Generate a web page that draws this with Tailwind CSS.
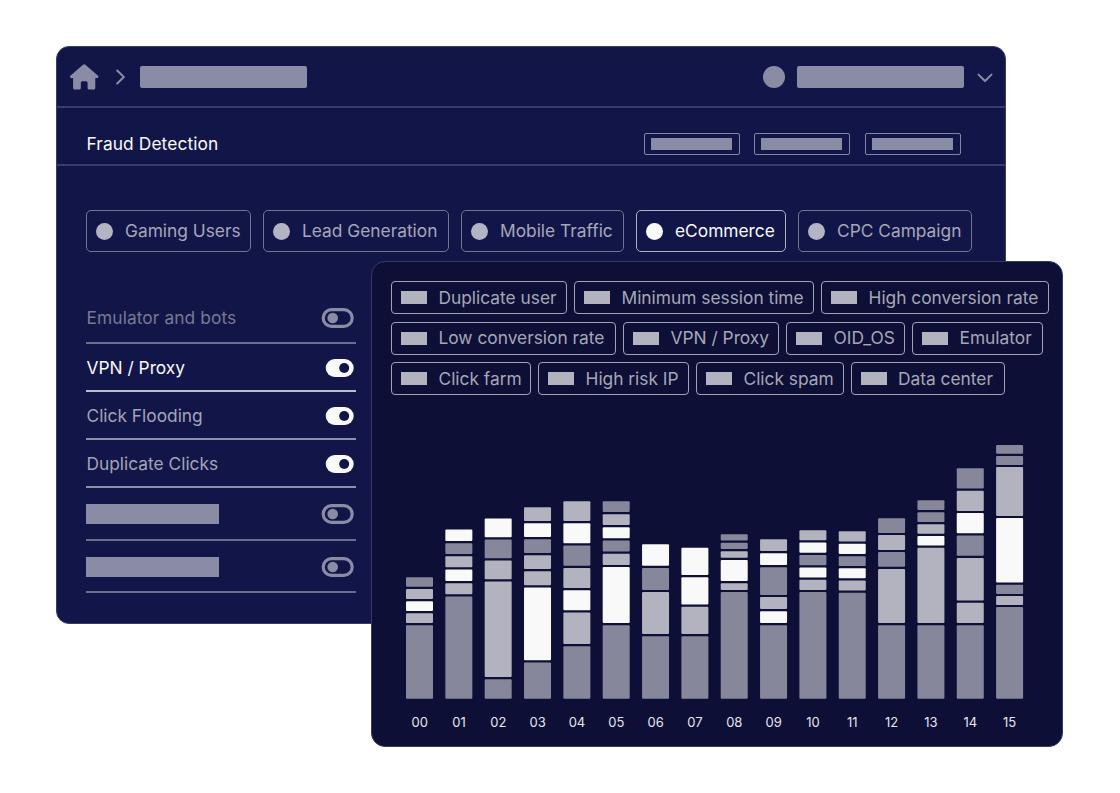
<!DOCTYPE html>
<html lang="en">
<head>
    <meta charset="UTF-8">
    <meta name="viewport" content="width=device-width, initial-scale=1.0">
    <title>Fraud Detection</title>
    <script src="https://cdn.jsdelivr.net/npm/@tailwindcss/browser@4"></script>
</head>
<body class="bg-white w-[1120px] h-[793px] overflow-hidden relative font-['Inter',sans-serif] text-[17.330px] leading-5 whitespace-nowrap">
    <!-- Dashboard window -->
    <main class="absolute left-[56px] top-[46px] w-[950px] h-[578px] bg-[#121547] border border-[#3b3d68] rounded-[13px] overflow-hidden">
        <!-- Top bar -->
        <header class="h-[61px] border-b-2 border-[#3a3c68] flex items-center pl-[13px] pr-[12px]">
            <svg class="w-[29px] h-[26px]" viewBox="0 0 29 26" fill="#8a8ba4">
                <path d="M13 .8a1.8 1.8 0 0 1 2.4 0L27.8 11.4c1.1 1 .6 2.7-.9 2.7H25.3V24a1.6 1.6 0 0 1-1.6 1.6H19.2A1.6 1.6 0 0 1 17.6 24v-5a1.8 1.8 0 0 0-1.8-1.8h-3.2a1.8 1.8 0 0 0-1.8 1.8v5a1.6 1.6 0 0 1-1.6 1.6H4.7A1.6 1.6 0 0 1 3.1 24v-9.9H1.5c-1.5 0-2-1.7-.9-2.7z"/>
            </svg>
            <svg class="w-[10px] h-[16px] ml-[17px]" viewBox="0 0 10 16" fill="none" stroke="#8a8ba4" stroke-width="2" stroke-linecap="round" stroke-linejoin="round">
                <path d="M1.2 1.5 7.8 8l-6.6 6.5"/>
            </svg>
            <div class="w-[167px] h-[22px] ml-[14px] rounded-[2px] bg-[#8a8ba4]"></div>
            <div class="w-[22px] h-[22px] ml-auto rounded-full bg-[#8a8ba4]"></div>
            <div class="w-[167px] h-[22px] ml-[12px] rounded-[2px] bg-[#8a8ba4]"></div>
            <svg class="w-[16px] h-[10px] ml-[13px] mt-[2px]" viewBox="0 0 16 10" fill="none" stroke="#8a8ba4" stroke-width="2" stroke-linecap="round" stroke-linejoin="round">
                <path d="M1.5 1.6 8 8l6.5-6.4"/>
            </svg>
        </header>

        <!-- Page title -->
        <div class="h-[58px] border-b-2 border-[#3a3c68] flex items-center pl-[29px] pr-[44px] pt-[16px]">
            <h1 class="pl-[0.5px] tracking-[0.1px] text-[#f9f9f9]">Fraud Detection</h1>
            <div class="ml-auto flex gap-[14.6px]">
                <div class="w-[96px] h-[22px] border border-[#8385a0] rounded-[2px] pl-[6px] pt-[4px]"><div class="w-[81px] h-[12px] bg-[#8a8ba4]"></div></div>
                <div class="w-[96px] h-[22px] border border-[#8385a0] rounded-[2px] pl-[6px] pt-[4px]"><div class="w-[81px] h-[12px] bg-[#8a8ba4]"></div></div>
                <div class="w-[96px] h-[22px] border border-[#8385a0] rounded-[2px] pl-[6px] pt-[4px]"><div class="w-[81px] h-[12px] bg-[#8a8ba4]"></div></div>
            </div>
        </div>

        <!-- Segments -->
        <nav class="flex gap-[12px] pl-[29px] mt-[44px] text-[#a6a7ba]">
            <div class="w-[165px] h-[42px] border border-[#73758f] rounded-[5px] flex items-center gap-[12px] pl-[9px]"><span class="w-[17px] h-[17px] rounded-full bg-[#b2b3c3]"></span>Gaming Users</div>
            <div class="w-[186px] h-[42px] border border-[#73758f] rounded-[5px] flex items-center gap-[12px] pl-[9px]"><span class="w-[17px] h-[17px] rounded-full bg-[#b2b3c3]"></span>Lead Generation</div>
            <div class="w-[163px] h-[42px] border border-[#73758f] rounded-[5px] flex items-center gap-[12px] pl-[9px]"><span class="w-[17px] h-[17px] rounded-full bg-[#b2b3c3]"></span>Mobile Traffic</div>
            <div class="w-[150px] h-[42px] border border-[#b0b1c0] rounded-[5px] flex items-center gap-[12px] pl-[9px] text-[#f9f9f9]"><span class="w-[17px] h-[17px] rounded-full bg-[#f9f9f9]"></span>eCommerce</div>
            <div class="w-[174px] h-[42px] border border-[#73758f] rounded-[5px] flex items-center gap-[12px] pl-[9px]"><span class="w-[17px] h-[17px] rounded-full bg-[#b2b3c3]"></span>CPC Campaign</div>
        </nav>

        <!-- Rules -->
        <ul class="w-[270px] ml-[29px] mt-[41px] text-[#a3a4b7]">
            <li class="h-[51px] border-b-2 border-[#6c6e8c] flex items-center justify-between pl-[0.5px] pr-[2px] tracking-[0.1px] text-[#777993]">
                Emulator and bots
                <svg class="w-[33px] h-[20px]" viewBox="0 0 33 20"><rect x="2.2" y="1.7" width="29" height="16.6" rx="8.3" fill="none" stroke="#8a8ba4" stroke-width="3.2"/><circle cx="11.7" cy="10" r="5.3" fill="#8a8ba4"/></svg>
            </li>
            <li class="h-[48px] border-b-2 border-[#bcbdca] flex items-center justify-between pl-[0.5px] pr-[2px] pt-[2px] text-[#f9f9f9]">
                VPN / Proxy
                <svg class="w-[29px] h-[18px]" viewBox="0 0 29 18"><rect x=".7" width="28" height="18" rx="9" fill="#f9f9f9"/><circle cx="19.2" cy="9" r="5" fill="#121547"/></svg>
            </li>
            <li class="h-[48px] border-b-2 border-[#8e90a7] flex items-center justify-between pl-[0.5px] pr-[2px] pt-[2px]">
                Click Flooding
                <svg class="w-[29px] h-[18px]" viewBox="0 0 29 18"><rect x=".7" width="28" height="18" rx="9" fill="#f9f9f9"/><circle cx="19.2" cy="9" r="5" fill="#121547"/></svg>
            </li>
            <li class="h-[48px] border-b-2 border-[#8e90a7] flex items-center justify-between pl-[0.5px] pr-[2px] pt-[2px]">
                Duplicate Clicks
                <svg class="w-[29px] h-[18px]" viewBox="0 0 29 18"><rect x=".7" width="28" height="18" rx="9" fill="#f9f9f9"/><circle cx="19.2" cy="9" r="5" fill="#121547"/></svg>
            </li>
            <li class="h-[53px] border-b-2 border-[#6c6e8c] flex items-center justify-between pr-[2px]">
                <div class="w-[133px] h-[20px] bg-[#8a8ba4]"></div>
                <svg class="w-[33px] h-[20px] mt-px" viewBox="0 0 33 20"><rect x="2.2" y="1.7" width="29" height="16.6" rx="8.3" fill="none" stroke="#8a8ba4" stroke-width="3.2"/><circle cx="11.7" cy="10" r="5.3" fill="#8a8ba4"/></svg>
            </li>
            <li class="h-[52px] border-b-2 border-[#6c6e8c] flex items-center justify-between pr-[2px] pt-px">
                <div class="w-[133px] h-[20px] bg-[#8a8ba4]"></div>
                <svg class="w-[33px] h-[20px] mt-px" viewBox="0 0 33 20"><rect x="2.2" y="1.7" width="29" height="16.6" rx="8.3" fill="none" stroke="#8a8ba4" stroke-width="3.2"/><circle cx="11.7" cy="10" r="5.3" fill="#8a8ba4"/></svg>
            </li>
        </ul>
    </main>

    <!-- Chart window, lies over the dashboard -->
    <section class="absolute left-[371px] top-[261px] w-[692px] h-[486px] bg-[#0d0f37] border border-[#383a60] rounded-[14px]">
        <!-- Legend -->
        <div class="h-[133px] pl-[19px] pt-[19px] flex flex-col gap-[7.5px] text-[#a6a7b4]">
            <div class="flex gap-[7px]">
                <div class="w-[176px] h-[33px] border border-[#a3a4b2] rounded-[4px] flex items-center gap-[11.5px] pl-[9px]"><span class="w-[26px] h-[13px] bg-[#b2b3bf]"></span>Duplicate user</div>
                <div class="w-[240px] h-[33px] border border-[#a3a4b2] rounded-[4px] flex items-center gap-[11.5px] pl-[9px]"><span class="w-[26px] h-[13px] bg-[#b2b3bf]"></span>Minimum session time</div>
                <div class="w-[228px] h-[33px] border border-[#a3a4b2] rounded-[4px] flex items-center gap-[11.5px] pl-[9px]"><span class="w-[26px] h-[13px] bg-[#b2b3bf]"></span>High conversion rate</div>
            </div>
            <div class="flex gap-[7px]">
                <div class="w-[225px] h-[33px] border border-[#a3a4b2] rounded-[4px] flex items-center gap-[11.5px] pl-[9px]"><span class="w-[26px] h-[13px] bg-[#b2b3bf]"></span>Low conversion rate</div>
                <div class="w-[156px] h-[33px] border border-[#a3a4b2] rounded-[4px] flex items-center gap-[11.5px] pl-[9px]"><span class="w-[26px] h-[13px] bg-[#b2b3bf]"></span>VPN / Proxy</div>
                <div class="w-[119px] h-[33px] border border-[#a3a4b2] rounded-[4px] flex items-center gap-[11.5px] pl-[9px]"><span class="w-[26px] h-[13px] bg-[#b2b3bf]"></span>OID_OS</div>
                <div class="w-[131px] h-[33px] border border-[#a3a4b2] rounded-[4px] flex items-center gap-[11.5px] pl-[9px]"><span class="w-[26px] h-[13px] bg-[#b2b3bf]"></span>Emulator</div>
            </div>
            <div class="flex gap-[7px]">
                <div class="w-[140px] h-[33px] border border-[#a3a4b2] rounded-[4px] flex items-center gap-[11.5px] pl-[9px]"><span class="w-[26px] h-[13px] bg-[#b2b3bf]"></span>Click farm</div>
                <div class="w-[151px] h-[33px] border border-[#a3a4b2] rounded-[4px] flex items-center gap-[11.5px] pl-[9px]"><span class="w-[26px] h-[13px] bg-[#b2b3bf]"></span>High risk IP</div>
                <div class="w-[147.5px] h-[33px] border border-[#a3a4b2] rounded-[4px] flex items-center gap-[11.5px] pl-[9px]"><span class="w-[26px] h-[13px] bg-[#b2b3bf]"></span>Click spam</div>
                <div class="w-[154px] h-[33px] border border-[#a3a4b2] rounded-[4px] flex items-center gap-[11.5px] pl-[9px]"><span class="w-[26px] h-[13px] bg-[#b2b3bf]"></span>Data center</div>
            </div>
        </div>

        <!-- Stacked bars -->
        <svg id="chart" class="w-[630px] h-[260px] ml-[28px] mt-[45px]" viewBox="0 0 630 260"></svg>
        <div id="hours" class="w-[629.3px] ml-[28px] mt-[12px] grid grid-cols-16 text-center text-[13px] leading-5 text-[#e6e6eb]"></div>
    </section>

    <script>
        const colors = { m: '#86879b', l: '#b2b3bf', w: '#f9f9f9' };
        const base = 259;
        // One entry per hour: segment colors from the top, and the height of each segment's top edge
        const bars = [
            ['mlwlm', [122, 110.2, 98, 86, 74]],
            ['wmlwlm', [169.7, 156, 143, 129.7, 116, 102.7]],
            ['wmllm', [180.7, 159.8, 138.8, 117.7, 20]],
            ['lwmllwm', [192, 176, 160, 144, 128, 111.8, 36.7]],
            ['lwmlwlm', [198, 176, 153.7, 131.2, 109, 86.8, 53]],
            ['mlwmlwm', [198, 185, 172, 158.7, 145.5, 132.1, 74]],
            ['wmlm', [155, 131.2, 107.1, 63]],
            ['wwlm', [151.5, 122, 92.4, 63]],
            ['mmlwlm', [165, 156.5, 148, 139.2, 116, 107.1]],
            ['lwmlwm', [160, 146, 132, 102.1, 88, 74]],
            ['lwmwlm', [169, 156.7, 144.2, 131.8, 119.4, 107.1]],
            ['lwmwlm', [168, 155.4, 143, 130.9, 118.7, 106.5]],
            ['mlmlm', [181, 164.1, 147.1, 130.2, 74]],
            ['mmlwlm', [199, 187, 175, 163.2, 151.4, 74]],
            ['mlwmllm', [231, 208.4, 186.1, 163.8, 141.2, 96.4, 74]],
            ['mmlwmlm', [254.3, 243.2, 232.1, 181.1, 114.4, 103.1, 92.1]]
        ];
        const chart = document.getElementById('chart');
        const hours = document.getElementById('hours');

        bars.forEach(([kinds, tops], i) => {
            tops.forEach((top, j) => {
                const last = j === tops.length - 1;
                const rect = document.createElementNS('http://www.w3.org/2000/svg', 'rect');
                rect.setAttribute('x', (6 + i * 39.34).toFixed(2));
                rect.setAttribute('y', (base - top + 0.2).toFixed(2));
                rect.setAttribute('width', 27);
                rect.setAttribute('height', (last ? top - 0.4 : top - tops[j + 1] - 2.2).toFixed(2));
                rect.setAttribute('rx', 1);
                rect.setAttribute('fill', colors[kinds[j]]);
                chart.appendChild(rect);
            });
            const label = document.createElement('span');
            label.textContent = String(i).padStart(2, '0');
            hours.appendChild(label);
        });
    </script>
</body>
</html>
